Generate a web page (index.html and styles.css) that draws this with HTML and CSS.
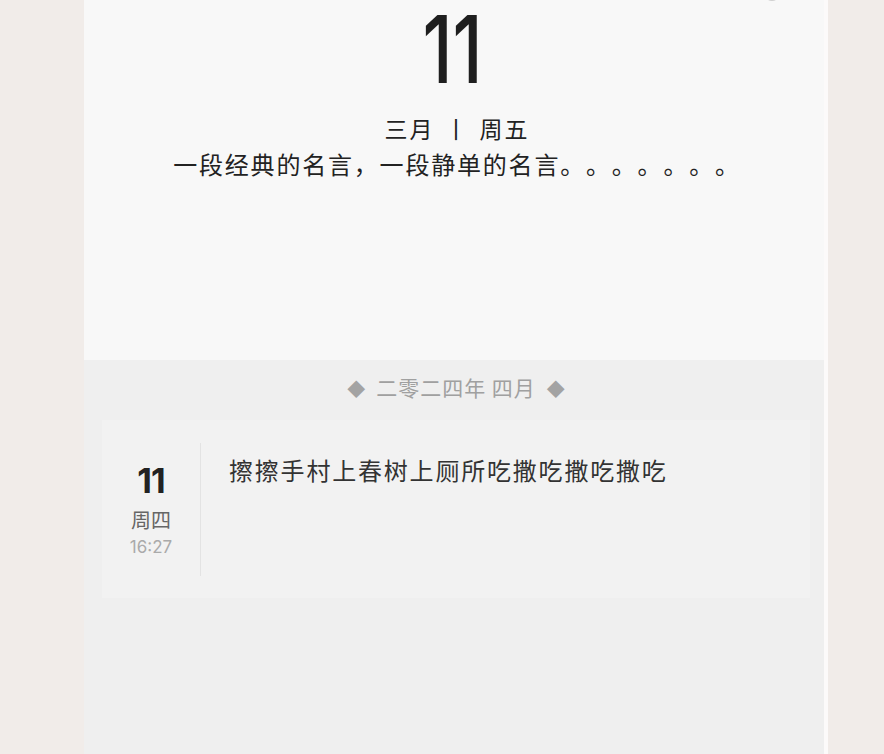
FILE: index.html
```html
<!DOCTYPE html>
<html lang="zh">
<head>
<meta charset="utf-8">
<title>日历</title>
<link rel="stylesheet" href="styles.css">
</head>
<body>
<div class="page">
  <div class="top-dot"></div>
  <div class="edge-strip"></div>
  <section class="hero">
    <div class="hero-day"><span class="hero-num">11</span></div>
    <div class="hero-date">三月<span class="sep">丨</span>周五</div>
    <div class="hero-quote">一段经典的名言，一段静单的名言。。。。。。。</div>
  </section>
  <section class="list">
    <div class="month-title"><span class="diamond">◆</span>二零二四年 四月<span class="diamond">◆</span></div>
    <div class="card">
      <div class="card-date">
        <div class="card-day">11</div>
        <div class="card-week">周四</div>
        <div class="card-time">16:27</div>
      </div>
      <div class="card-text">擦擦手村上春树上厕所吃撒吃撒吃撒吃</div>
    </div>
  </section>
</div>
</body>
</html>
```
FILE: styles.css
```css
html, body {
  margin: 0;
  padding: 0;
}
body {
  background: #f1ece9;
  font-family: "Noto Sans CJK SC", "Noto Sans", sans-serif;
  height: 754px;
  overflow: hidden;
  text-spacing-trim: space-all;
}
.page {
  position: relative;
  margin-left: 84px;
  width: 744px;
  min-height: 754px;
  background: #efefef;
}
.edge-strip {
  position: absolute;
  top: 0;
  right: 0;
  bottom: 0;
  width: 4px;
  background: #fcfafa;
}
.top-dot {
  position: absolute;
  top: -15px;
  left: 680px;
  width: 16px;
  height: 16px;
  border-radius: 50%;
  background: #d0d0d0;
}
.hero {
  height: 360px;
  background: #f8f8f8;
  text-align: center;
  color: #222;
  overflow: hidden;
}
.hero-day {
  font-family: Inter, Roboto, sans-serif;
  font-weight: 500;
  font-size: 93px;
  line-height: 96px;
  margin-top: 1px;
  color: #1f1f1f;
}
.hero-num {
  display: inline-block;
  letter-spacing: 0;
  margin-right: 6px;
  transform: scaleX(0.78);
}
.hero-date {
  font-size: 23px;
  line-height: 30px;
  letter-spacing: 2px;
  padding-left: 2px;
  margin-top: 16px;
}
.sep {
  margin: 0 10px;
}
.hero-quote {
  font-size: 24px;
  line-height: 30px;
  letter-spacing: 1.8px;
  padding-left: 2px;
  margin-top: 6px;
}
.list {
  padding-top: 12px;
}
.month-title {
  text-align: center;
  font-size: 21px;
  line-height: 30px;
  letter-spacing: 1px;
  color: #a0a0a0;
}
.diamond {
  font-size: 18px;
  letter-spacing: 0;
  margin: 0 11px;
  color: #a3a3a3;
}
.card {
  display: flex;
  margin: 17px 18px 0 18px;
  height: 178px;
  box-sizing: border-box;
  padding: 23px 0 22px;
  background: #f2f2f2;
}
.card-date {
  width: 98px;
  border-right: 1px solid #e3e3e3;
  text-align: center;
  flex-shrink: 0;
}
.card-day {
  font-family: Inter, Roboto, sans-serif;
  font-weight: 700;
  font-size: 34px;
  line-height: 40px;
  letter-spacing: -1px;
  margin-top: 18px;
  color: #222;
}
.card-week {
  font-size: 20px;
  line-height: 28px;
  color: #666;
  margin-top: 5px;
}
.card-time {
  font-family: Inter, Roboto, sans-serif;
  font-size: 17px;
  line-height: 24px;
  color: #aaa;
  margin-top: 1px;
}
.card-text {
  padding-left: 28px;
  font-size: 24px;
  line-height: 32px;
  letter-spacing: 1.8px;
  color: #333;
  margin-top: 11px;
}
```
